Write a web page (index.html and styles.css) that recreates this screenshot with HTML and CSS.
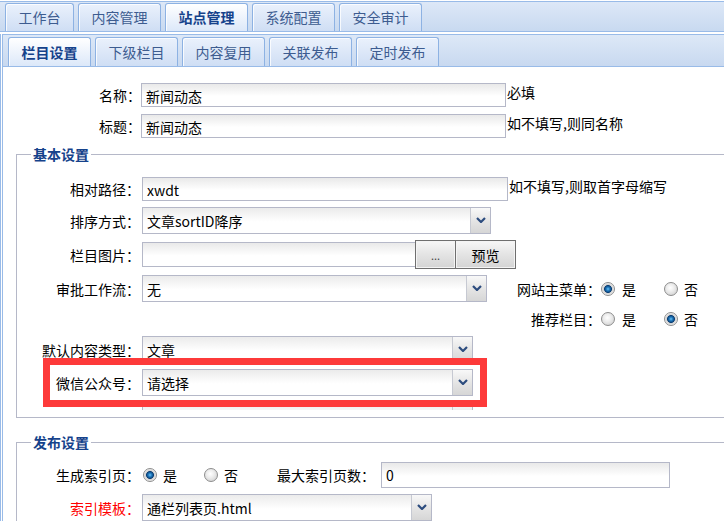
FILE: index.html
```html
<!DOCTYPE html>
<html lang="zh-CN">
<head>
<meta charset="utf-8">
<title>栏目设置</title>
<link rel="stylesheet" href="styles.css">
</head>
<body>
<div class="page">
  <div class="tabs tabs-main">
    <span class="tab">工作台</span>
    <span class="tab">内容管理</span>
    <span class="tab active">站点管理</span>
    <span class="tab">系统配置</span>
    <span class="tab">安全审计</span>
  </div>
  <div class="panel">
    <div class="tabs tabs-sub">
      <span class="tab active">栏目设置</span>
      <span class="tab">下级栏目</span>
      <span class="tab">内容复用</span>
      <span class="tab">关联发布</span>
      <span class="tab">定时发布</span>
    </div>
    <div class="form">
      <div class="row">
        <label class="lbl lbl-top">名称：</label>
        <span class="field w365">新闻动态</span>
        <span class="hint">必填</span>
      </div>
      <div class="row">
        <label class="lbl lbl-top">标题：</label>
        <span class="field w365">新闻动态</span>
        <span class="hint">如不填写,则同名称</span>
      </div>

      <fieldset class="fs fs-basic">
        <legend>基本设置</legend>
        <div class="row">
          <label class="lbl">相对路径：</label>
          <span class="field w366">xwdt</span>
          <span class="hint">如不填写,则取首字母缩写</span>
        </div>
        <div class="row">
          <label class="lbl">排序方式：</label>
          <div class="combo w349"><span class="combo-text">文章sortID降序</span><span class="trigger"><svg width="10" height="6" viewBox="0 0 10 6"><path d="M1 1 L5 5 L9 1" fill="none" stroke="#2c4c7e" stroke-width="2.2"/></svg></span></div>
        </div>
        <div class="row">
          <label class="lbl">栏目图片：</label>
          <span class="field w274 h25"></span>
          <span class="btn btn-dots">...</span>
          <span class="btn btn-view">预览</span>
        </div>
        <div class="row">
          <label class="lbl">审批工作流：</label>
          <div class="combo w345"><span class="combo-text">无</span><span class="trigger"><svg width="10" height="6" viewBox="0 0 10 6"><path d="M1 1 L5 5 L9 1" fill="none" stroke="#2c4c7e" stroke-width="2.2"/></svg></span></div>
          <div class="rg rg-first">
            <span class="rg-lbl">网站主菜单：</span>
            <span class="radio on"></span><span class="opt-text">是</span>
            <span class="radio r2"></span><span class="opt-text">否</span>
          </div>
        </div>
        <div class="row row-rg">
          <div class="rg">
            <span class="rg-lbl">推荐栏目：</span>
            <span class="radio"></span><span class="opt-text">是</span>
            <span class="radio on r2"></span><span class="opt-text">否</span>
          </div>
        </div>
        <div class="row">
          <label class="lbl">默认内容类型：</label>
          <div class="combo w331"><span class="combo-text">文章</span><span class="trigger"><svg width="10" height="6" viewBox="0 0 10 6"><path d="M1 1 L5 5 L9 1" fill="none" stroke="#2c4c7e" stroke-width="2.2"/></svg></span></div>
        </div>
        <div class="row">
          <label class="lbl">微信公众号：</label>
          <div class="combo w331"><span class="combo-text">请选择</span><span class="trigger"><svg width="10" height="6" viewBox="0 0 10 6"><path d="M1 1 L5 5 L9 1" fill="none" stroke="#2c4c7e" stroke-width="2.2"/></svg></span></div>
        </div>
        <div class="row clip">
          <label class="lbl"></label>
          <div class="combo w331"><span class="combo-text"></span><span class="trigger"></span></div>
        </div>
      </fieldset>

      <fieldset class="fs fs-publish">
        <legend>发布设置</legend>
        <div class="row">
          <label class="lbl">生成索引页：</label>
          <span class="radio on first"></span><span class="opt-text">是</span>
          <span class="radio r2b"></span><span class="opt-text">否</span>
          <label class="lbl-inline">最大索引页数：</label>
          <span class="field w289 h26">0</span>
        </div>
        <div class="row">
          <label class="lbl red">索引模板：</label>
          <div class="combo w290"><span class="combo-text">通栏列表页.html</span><span class="trigger"><svg width="10" height="6" viewBox="0 0 10 6"><path d="M1 1 L5 5 L9 1" fill="none" stroke="#2c4c7e" stroke-width="2.2"/></svg></span></div>
        </div>
      </fieldset>
    </div>
  </div>
  <div class="mark"></div>
</div>
</body>
</html>
```

FILE: styles.css
```css
* { box-sizing: border-box; }
html, body { margin: 0; padding: 0; }
body {
  width: 724px;
  height: 521px;
  overflow: hidden;
  background: #fff;
  font-family: "Noto Sans CJK SC", "Microsoft YaHei", sans-serif;
  font-size: 14px;
  color: #000;
}
.page { position: relative; width: 724px; height: 521px; overflow: hidden; }

/* tab strips */
.tabs {
  display: flex;
  align-items: flex-end;
  gap: 4px;
  border-top: 1px solid #99bbe8;
  border-bottom: 1px solid #99bbe8;
  background: linear-gradient(#dde8f7, #c8d9f0);
}
.tabs-main { margin-top: 1px; height: 31px; padding-left: 5px; }
.tabs-sub { margin-top: 2px; height: 33px; padding-left: 5px; }
.tab {
  flex: none;
  height: 28px;
  line-height: 26px;
  padding: 0 12.5px;
  border: 1px solid #8db2e3;
  border-bottom: 0;
  border-radius: 3px 3px 0 0;
  background: linear-gradient(#eaf1fc, #cfdef4);
  box-shadow: inset 1px 1px 0 rgba(255,255,255,0.8);
  color: #3d5c90;
  white-space: nowrap;
}
.tabs-sub .tab { height: 29px; line-height: 28px; }
.tab.active {
  background: linear-gradient(#ffffff, #dce8f9);
  color: #15428b;
  font-weight: bold;
}

/* panel with double left edge */
.panel { border-left: 3px double #99bbe8; height: 488px; }

.form { padding-top: 15px; }

.row { display: flex; align-items: center; margin-bottom: 6px; }
.lbl { flex: none; width: 123px; margin-right: 2px; text-align: right; white-space: nowrap; }
.lbl-top { width: 138px; margin-right: 0; }
.red { color: #ff0000; }

.field {
  display: block;
  flex: none;
  height: 24px;
  border: 1px solid #b5b8c8;
  background: linear-gradient(#e9e9e9, #ffffff 55%);
  padding: 3px 4px 0;
  line-height: 19px;
  overflow: hidden;
  white-space: nowrap;
}
.h25 { height: 25px; }
.h26 { height: 26px; }
.w365 { width: 365px; }
.w366 { width: 366px; }
.w274 { width: 274px; }
.w289 { width: 289px; }
.hint { margin-left: 1px; margin-bottom: 5px; white-space: nowrap; }

/* combo */
.combo {
  flex: none;
  display: flex;
  height: 27px;
  border: 1px solid #b5b8c8;
  background: linear-gradient(#ebebeb, #ffffff 55%);
}
.w349 { width: 349px; }
.w345 { width: 345px; }
.w331 { width: 331px; }
.w290 { width: 290px; }
.combo-text { flex: 1; padding: 3px 4px 0; line-height: 20px; white-space: nowrap; overflow: hidden; }
.trigger {
  flex: none;
  width: 20px;
  border-left: 1px solid #c6c9d2;
  background: linear-gradient(#f8f8f8, #e2e2e2 60%, #d6d6d6);
  display: flex;
  align-items: center;
  justify-content: center;
  padding-bottom: 2px;
}

/* buttons */
.btn {
  flex: none;
  height: 29px;
  border: 1px solid #6f6f6f;
  background: linear-gradient(#f7f7f7, #e4e4e4 50%, #d4d4d4);
  box-shadow: inset 0 0 0 1px #f4f4f4;
  display: flex;
  align-items: center;
  justify-content: center;
  white-space: nowrap;
}
.btn-dots { width: 41px; margin-left: -1px; font-size: 11px; color: #444; align-items: flex-end; padding-bottom: 5px; }
.btn-view { width: 61px; margin-left: -1px; }

/* fieldsets: right edge lies beyond the window, so no right border */
.fs {
  width: 708px;
  margin: 0 0 0 13px;
  padding: 12px 0 7px 0;
  border: 1px solid #b5b8c8;
  border-right: 0;
  min-width: 0;
}
.fs legend {
  margin-left: 14px;
  padding: 0 2px;
  line-height: 20px;
  font-weight: bold;
  color: #15428b;
}
.fs-publish { margin-top: 14px; padding-top: 10px; }

.clip { height: 8px; overflow: hidden; align-items: flex-start; margin-bottom: 0; }

/* radio groups */
.rg { display: flex; align-items: center; margin-left: 28px; }
.row-rg { height: 22px; padding-left: 498px; }
.row-rg .rg { margin-left: 0; }
.rg-lbl { width: 86px; text-align: right; white-space: nowrap; }
.radio {
  flex: none;
  width: 14px;
  height: 14px;
  border-radius: 50%;
  border: 1px solid #8d8d8d;
  background: radial-gradient(circle at 45% 40%, #ffffff 0, #ececec 40%, #c8c8c8 100%);
  margin-right: 7px;
}
.radio.on {
  background: radial-gradient(circle, #6cc4f4 0, #1f78bd 1.8px, #0c3f74 3.6px, #cfcfcf 4.3px, #eeeeee 6px);
}
.rg .r2 { margin-left: 28px; margin-right: 6px; }
.radio.first { margin-left: 1px; margin-right: 6px; }
.radio.r2b { margin-left: 27px; margin-right: 6px; }
.opt-text { white-space: nowrap; }
.lbl-inline { margin-left: 39px; margin-right: 6px; white-space: nowrap; }

/* red annotation frame */
.mark {
  position: absolute;
  left: 43px;
  top: 358px;
  width: 444px;
  height: 49px;
  border: 7px solid #fd3a3a;
}
```
